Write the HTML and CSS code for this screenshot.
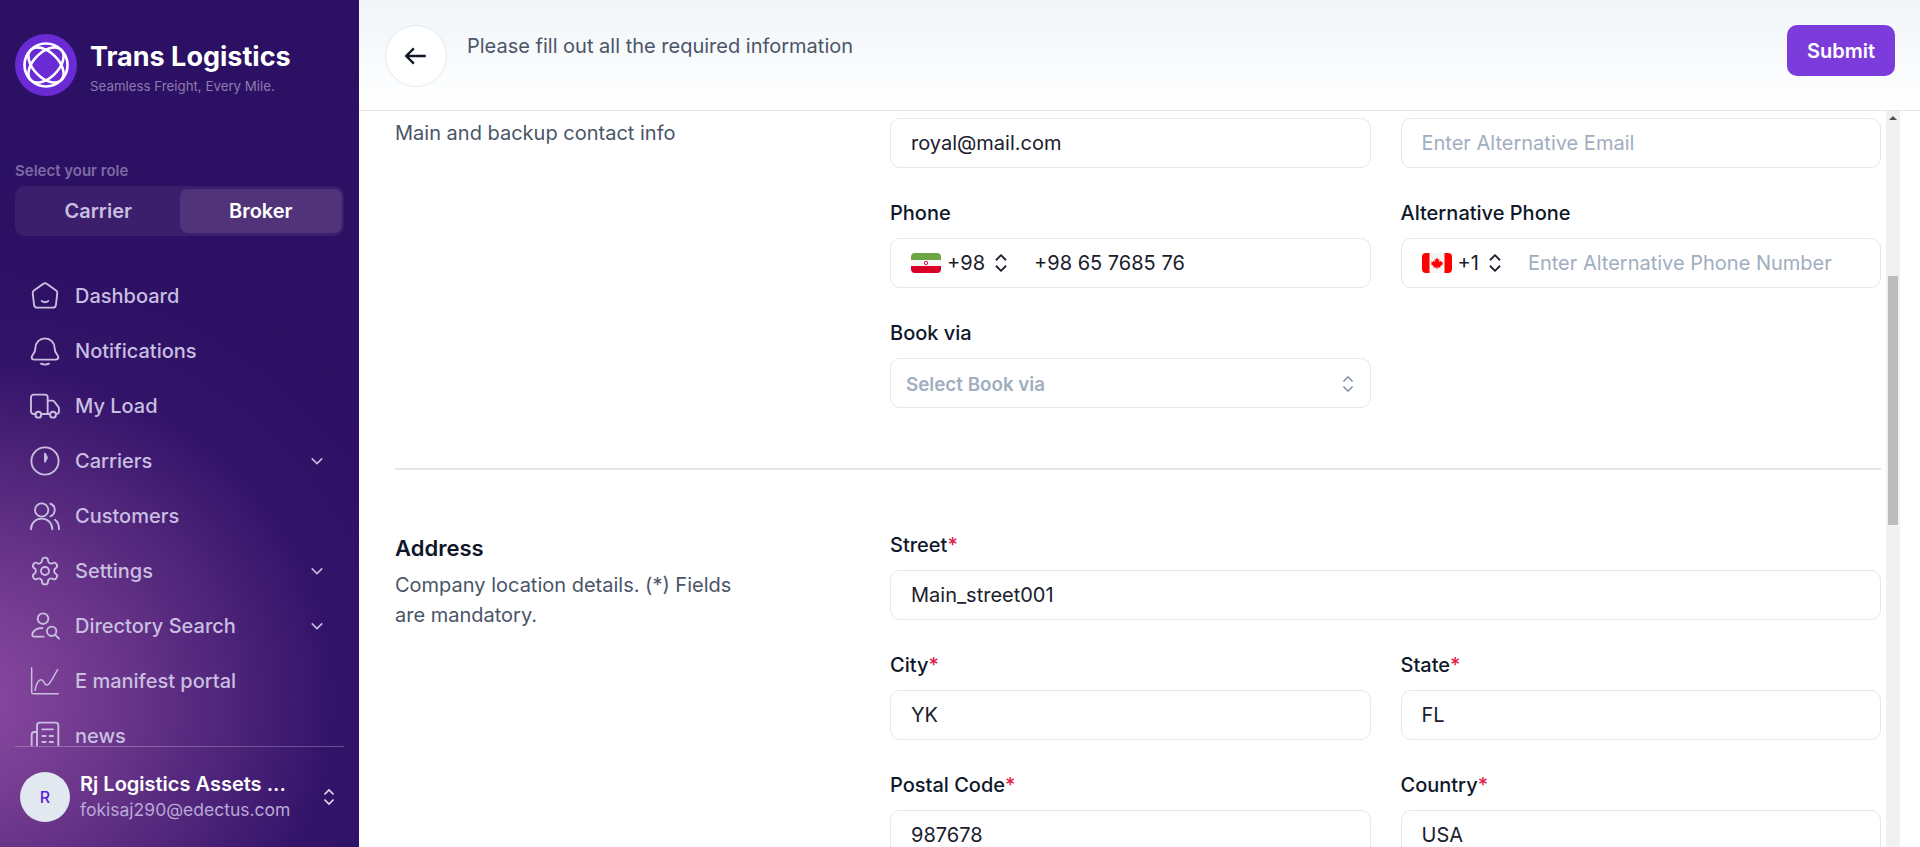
FILE: index.html
```html
<!DOCTYPE html>
<html lang="en">
<head>
    <meta charset="UTF-8">
    <title>Trans Logistics</title>
    <link rel="stylesheet" href="styles.css">
</head>
<body>

<div class="app">
  <aside class="sidebar">
    <div class="brand">
      <svg class="brand-logo" viewBox="0 0 62 62">
        <circle cx="31" cy="31" r="31" fill="#6a2bd4"/>
        <g fill="none" stroke="#fff" stroke-width="2.6">
          <circle cx="31" cy="31" r="21.5"/>
          <ellipse cx="31" cy="31" rx="21.5" ry="12.5" transform="rotate(45 31 31)"/>
          <ellipse cx="31" cy="31" rx="21.5" ry="12.5" transform="rotate(-45 31 31)"/>
        </g>
      </svg>
      <div class="brand-text">
        <div class="brand-name">Trans Logistics</div>
        <div class="brand-tag">Seamless Freight, Every Mile.</div>
      </div>
    </div>

    <div class="role-label">Select your role</div>
    <div class="role-toggle">
      <div class="role-btn">Carrier</div>
      <div class="role-btn active">Broker</div>
    </div>

    <nav class="nav">
      <a class="nav-item">
        <svg class="nav-icon" viewBox="0 0 24 24"><path d="M10.7 2.9a2.2 2.2 0 0 1 2.6 0l7 5a2.2 2.2 0 0 1 .9 2.1l-1 8.6a2.4 2.4 0 0 1-2.4 2.1H6.2a2.4 2.4 0 0 1-2.4-2.1l-1-8.6a2.2 2.2 0 0 1 .9-2.1z"/><path d="M9.5 15.8c1.5 1 3.5 1 5 0"/></svg>
        <span>Dashboard</span>
      </a>
      <a class="nav-item">
        <svg class="nav-icon" viewBox="0 0 24 24"><path d="M12 2.5a7.2 7.2 0 0 0-7.2 7.2c0 4.3-2.8 5.1-2.8 7 0 1 .9 1.8 2 1.8h16c1.1 0 2-.8 2-1.8 0-1.9-2.8-2.7-2.8-7A7.2 7.2 0 0 0 12 2.5z"/><path d="M9 21.5c2 .9 4 .9 6 0"/></svg>
        <span>Notifications</span>
      </a>
      <a class="nav-item">
        <svg class="nav-icon" viewBox="0 0 24 24"><path d="M5 18H3.5a2 2 0 0 1-2-2V5.5a2 2 0 0 1 2-2H12a2 2 0 0 1 2 2V18"/><path d="M14 8h3.500a2 2 0 0 1 1.600.8l3 4a2 2 0 0 1 .4 1.200V16a2 2 0 0 1-2 2"/><path d="M9 18h7"/><circle cx="7" cy="18.500" r="2.200"/><circle cx="18" cy="18.500" r="2.200"/></svg>
        <span>My Load</span>
      </a>
      <a class="nav-item">
        <svg class="nav-icon" viewBox="0 0 24 24"><circle cx="12" cy="12" r="10.200"/><path d="M12 6.500v6l1.500-3z"/></svg>
        <span>Carriers</span>
        <svg class="nav-chevron" viewBox="0 0 24 24"><path d="M5 8.500l7 7 7-7"/></svg>
      </a>
      <a class="nav-item">
        <svg class="nav-icon" viewBox="0 0 24 24"><circle cx="9.500" cy="7.500" r="5"/><path d="M1.500 22c0-4.700 3.500-8 8-8s8 3.300 8 8"/><path d="M16 2.800c2 .6 3.300 2.500 3.300 4.700s-1.300 4-3.300 4.700"/><path d="M19.500 14.800c1.900 1.300 3 3.700 3 7.200"/></svg>
        <span>Customers</span>
      </a>
      <a class="nav-item">
        <svg class="nav-icon" viewBox="0 0 24 24"><path d="M12.22 2h-.44a2 2 0 0 0-2 2v.18a2 2 0 0 1-1 1.73l-.43.25a2 2 0 0 1-2 0l-.15-.08a2 2 0 0 0-2.73.73l-.22.38a2 2 0 0 0 .73 2.73l.15.1a2 2 0 0 1 1 1.72v.51a2 2 0 0 1-1 1.74l-.15.09a2 2 0 0 0-.73 2.73l.22.38a2 2 0 0 0 2.73.73l.15-.08a2 2 0 0 1 2 0l.43.25a2 2 0 0 1 1 1.73V20a2 2 0 0 0 2 2h.44a2 2 0 0 0 2-2v-.18a2 2 0 0 1 1-1.73l.43-.25a2 2 0 0 1 2 0l.15.08a2 2 0 0 0 2.73-.73l.22-.39a2 2 0 0 0-.73-2.73l-.15-.08a2 2 0 0 1-1-1.74v-.5a2 2 0 0 1 1-1.74l.15-.09a2 2 0 0 0 .73-2.73l-.22-.38a2 2 0 0 0-2.73-.73l-.15.08a2 2 0 0 1-2 0l-.43-.25a2 2 0 0 1-1-1.73V4a2 2 0 0 0-2-2z"/><circle cx="12" cy="12" r="3"/></svg>
        <span>Settings</span>
        <svg class="nav-chevron" viewBox="0 0 24 24"><path d="M5 8.500l7 7 7-7"/></svg>
      </a>
      <a class="nav-item">
        <svg class="nav-icon" viewBox="0 0 24 24"><circle cx="10.500" cy="6.500" r="4"/><path d="M10 13.500c-3.500 0-6.500 1.500-7.500 4.500-.3 1 .2 2 1.300 2H11"/><circle cx="17" cy="16" r="3.500"/><path d="M19.500 18.500l3 3"/></svg>
        <span>Directory Search</span>
        <svg class="nav-chevron" viewBox="0 0 24 24"><path d="M5 8.500l7 7 7-7"/></svg>
      </a>
      <a class="nav-item">
        <svg class="nav-icon thin" viewBox="0 0 24 24"><path d="M2 2v18.500a1 1 0 0 0 1 1h19"/><path d="M4.500 19c1-5 2.500-8 4.500-8 2.500 0 2 4 4.500 4 2.500 0 4.500-6 8-11.500"/></svg>
        <span>E manifest portal</span>
      </a>
      <a class="nav-item">
        <svg class="nav-icon" viewBox="0 0 24 24"><path d="M4 22h16a2 2 0 0 0 2-2V4a2 2 0 0 0-2-2H8a2 2 0 0 0-2 2v16a2 2 0 0 1-2 2zm0 0a2 2 0 0 1-2-2v-9c0-1.100.9-2 2-2h2"/><path d="M10 7h8M10 12h2.500M15.500 12H18M10 16.500h2.500M15.500 16.500H18"/></svg>
        <span>news</span>
      </a>
    </nav>

    <div class="account">
      <div class="avatar">R</div>
      <div class="account-info">
        <div class="account-name">Rj Logistics Assets ...</div>
        <div class="account-mail">fokisaj290@edectus.com</div>
      </div>
      <svg class="account-switch" viewBox="0 0 24 24"><path d="M6.500 9l5.500-5.500 5.500 5.500M6.500 15l5.500 5.500 5.500-5.500"/></svg>
    </div>
  </aside>

  <main class="main">
    <header class="topbar">
      <button class="back-btn">
        <svg viewBox="0 0 24 24"><path d="M21 12H3.500M10 5l-7 7 7 7"/></svg>
      </button>
      <p class="topbar-text">Please fill out all the required information</p>
      <button class="submit-btn">Submit</button>
    </header>

    <div class="content">
      <div class="form-scroll">
        <section class="form-section">
          <div class="section-info">
            <p>Main and backup contact info</p>
          </div>
          <div class="fields">
            <div class="field"><input class="text-input" type="text" value="royal@mail.com"></div>
            <div class="field"><input class="text-input" type="text" placeholder="Enter Alternative Email"></div>

            <div class="field">
              <label>Phone</label>
              <div class="phone-input">
                <svg class="flag" viewBox="0 0 30 20">
                  <clipPath id="flagIr"><rect width="30" height="20" rx="4"/></clipPath>
                  <g clip-path="url(#flagIr)">
                    <rect width="30" height="7" fill="#6da544"/>
                    <rect y="7" width="30" height="6" fill="#f6f6f6"/>
                    <rect y="13" width="30" height="7" fill="#d80027"/>
                    <circle cx="15" cy="10" r="1.700" fill="none" stroke="#d80027" stroke-width=".9"/>
                  </g>
                </svg>
                <span class="dial">+98</span>
                <svg class="dial-sort" viewBox="0 0 24 24"><path d="M6.500 9l5.500-5.500 5.500 5.500M6.500 15l5.500 5.500 5.500-5.500"/></svg>
                <input class="phone-number" type="text" value="+98 65 7685 76">
              </div>
            </div>
            <div class="field">
              <label>Alternative Phone</label>
              <div class="phone-input">
                <svg class="flag" viewBox="0 0 30 20">
                  <clipPath id="flagCa"><rect width="30" height="20" rx="4"/></clipPath>
                  <g clip-path="url(#flagCa)">
                    <rect width="30" height="20" fill="#f6f6f6"/>
                    <rect width="7.500" height="20" fill="#ff0000"/>
                    <rect x="22.500" width="7.500" height="20" fill="#ff0000"/>
                    <path d="M15 4.500l1.200 2.200 1.300-.7-.5 3 1.700-1.200.4 1.200 1.800-.3-.6 1.900.8.500-3 2.400.3 1.200-2.900-.4V16h-1v-1.700l-2.900.4.300-1.200-3-2.400.8-.5-.6-1.900 1.800.3.4-1.200L13 9l-.5-3 1.300.7z" fill="#ff0000"/>
                  </g>
                </svg>
                <span class="dial">+1</span>
                <svg class="dial-sort" viewBox="0 0 24 24"><path d="M6.500 9l5.500-5.500 5.500 5.500M6.500 15l5.500 5.500 5.500-5.500"/></svg>
                <input class="phone-number" type="text" placeholder="Enter Alternative Phone Number">
              </div>
            </div>

            <div class="field">
              <label>Book via</label>
              <div class="select-input">
                <span>Select Book via</span>
                <svg viewBox="0 0 24 24"><path d="M6.500 9l5.500-5.500 5.500 5.500M6.500 15l5.500 5.500 5.500-5.500"/></svg>
              </div>
            </div>
          </div>
        </section>

        <section class="form-section last">
          <div class="section-info">
            <h3>Address</h3>
            <p>Company location details. (*) Fields are mandatory.</p>
          </div>
          <div class="fields">
            <div class="field wide">
              <label>Street<em>*</em></label>
              <input class="text-input" type="text" value="Main_street001">
            </div>
            <div class="field">
              <label>City<em>*</em></label>
              <input class="text-input" type="text" value="YK">
            </div>
            <div class="field">
              <label>State<em>*</em></label>
              <input class="text-input" type="text" value="FL">
            </div>
            <div class="field">
              <label>Postal Code<em>*</em></label>
              <input class="text-input" type="text" value="987678">
            </div>
            <div class="field">
              <label>Country<em>*</em></label>
              <input class="text-input" type="text" value="USA">
            </div>
          </div>
        </section>
      </div>

      <div class="scrollbar">
        <div class="scroll-arrow"></div>
        <div class="scroll-thumb"></div>
      </div>
    </div>
  </main>
</div>

</body>
</html>
```
FILE: styles.css
```css
* {
	box-sizing: border-box;
}
html, body {
	height: 100%;
}
body {
	margin: 0;
	font-family: Inter, "Liberation Sans", sans-serif;
	color: #0f172a;
	overflow: hidden;
}
.app {
	display: flex;
	height: 100vh;
}

/* Sidebar */
.sidebar {
	width: 359px;
	flex-shrink: 0;
	display: flex;
	flex-direction: column;
	color: #c9bfe0;
	background-color: #2c1063;
	background-image:
		radial-gradient(ellipse 520px 470px at -40px 700px, #8d4ba3 0%, rgba(125, 65, 150, 0.78) 30%, rgba(60, 25, 115, 0.4) 72%, rgba(44, 16, 99, 0) 100%);
}
.brand {
	display: flex;
	align-items: center;
	gap: 13px;
	padding: 34px 0 0 15px;
}
.brand-logo {
	width: 62px;
	height: 62px;
}
.brand-text {
	margin-top: 4px;
}
.brand-name {
	font-size: 27px;
	font-weight: 700;
	line-height: 36px;
	color: #fff;
}
.brand-tag {
	margin-top: 1px;
	font-size: 13.3px;
	line-height: 20px;
	color: #8f7bb0;
}
.role-label {
	margin: 65px 0 0 15px;
	font-size: 15px;
	font-weight: 600;
	line-height: 20px;
	color: #7f6aa3;
}
.role-toggle {
	display: flex;
	margin: 5px 15px 0 15px;
	height: 50px;
	padding: 3px 2px;
	border-radius: 10px;
	background: #3b1f6d;
}
.role-btn {
	flex: 1;
	display: flex;
	align-items: center;
	justify-content: center;
	border-radius: 8px;
	font-size: 20px;
	font-weight: 600;
}
.role-btn.active {
	background: #503378;
	color: #fff;
}
.nav {
	flex: 1;
	min-height: 0;
	overflow: hidden;
	margin-top: 32px;
}
.nav-item {
	display: flex;
	align-items: center;
	height: 55px;
	padding: 0 33px 0 29px;
	font-size: 20px;
	font-weight: 500;
	line-height: 20px;
}
.nav-item span {
	flex: 1;
	margin-left: 14px;
}
.nav-icon {
	width: 32px;
	height: 32px;
	fill: none;
	stroke: #c9bfe0;
	stroke-width: 1.400;
	stroke-linecap: round;
	stroke-linejoin: round;
}
.nav-icon.thin {
	stroke-width: 1.100;
}
.nav-chevron {
	width: 18px;
	height: 18px;
	fill: none;
	stroke: #c9bfe0;
	stroke-width: 2;
}
.account {
	display: flex;
	align-items: center;
	height: 101px;
	margin: 0 15px;
	padding: 0 0 0 5px;
	border-top: 1px solid rgba(255, 255, 255, 0.25);
}
.avatar {
	width: 50px;
	height: 50px;
	flex-shrink: 0;
	display: flex;
	align-items: center;
	justify-content: center;
	border-radius: 50%;
	background: #e2e8f0;
	color: #5b21d6;
	font-size: 16px;
	font-weight: 500;
}
.account-info {
	flex: 1;
	margin-left: 10px;
	white-space: nowrap;
}
.account-name {
	font-size: 20px;
	font-weight: 600;
	line-height: 26px;
	color: #fff;
}
.account-mail {
	font-size: 17.5px;
	line-height: 26px;
	color: #b9a8d6;
}
.account-switch {
	width: 20px;
	height: 20px;
	margin-right: 5px;
	fill: none;
	stroke: #e0d8ee;
	stroke-width: 2;
}

/* Top bar */
.main {
	flex: 1;
	min-width: 0;
	display: flex;
	flex-direction: column;
}
.topbar {
	display: flex;
	height: 111px;
	flex-shrink: 0;
	padding: 25px 25px 0 26px;
	border-bottom: 1px solid #e3e5ea;
	background: linear-gradient(180deg, #f1f5f9 0%, #ffffff 100%);
}
.back-btn {
	width: 62px;
	height: 62px;
	display: flex;
	align-items: center;
	justify-content: center;
	padding: 0;
	border: 1px solid #e2e8f0;
	border-radius: 50%;
	background: #fff;
}
.back-btn svg {
	width: 26px;
	height: 26px;
	fill: none;
	stroke: #0f172a;
	stroke-width: 2.200;
}
.topbar-text {
	flex: 1;
	margin: 9px 0 0 20px;
	font-size: 20px;
	line-height: 24px;
	color: #4a5568;
}
.submit-btn {
	width: 108px;
	height: 51px;
	border: 0;
	border-radius: 10px;
	background: #7c3cdb;
	color: #fff;
	font-family: inherit;
	font-size: 20px;
	font-weight: 600;
}

/* Form */
.content {
	flex: 1;
	min-height: 0;
	display: flex;
	padding-right: 20px;
}
.form-scroll {
	flex: 1;
	min-width: 0;
	overflow: hidden;
	padding: 7px 5px 0 36px;
}
.form-section {
	display: grid;
	grid-template-columns: 495px 1fr;
	padding-bottom: 60px;
	border-bottom: 2px solid #e3e5ea;
}
.form-section.last {
	padding-top: 63px;
	border-bottom: 0;
}
.section-info h3 {
	margin: 0 0 7px;
	font-size: 22px;
	font-weight: 600;
	line-height: 30px;
}
.section-info p {
	max-width: 370px;
	margin: 0;
	font-size: 20px;
	line-height: 30px;
	color: #4a5568;
}
.fields {
	display: grid;
	grid-template-columns: 1fr 1fr;
	gap: 33px 30px;
}
.field.wide {
	grid-column: span 2;
}
.field label {
	display: block;
	margin-bottom: 13px;
	font-size: 20px;
	font-weight: 500;
	line-height: 24px;
}
.field em {
	font-style: normal;
	color: #e11d48;
}
.text-input, .phone-input, .select-input {
	width: 100%;
	height: 50px;
	border: 1px solid #e2e8f0;
	border-radius: 10px;
	background: #fff;
}
.text-input {
	display: block;
	padding: 0 20px;
	font-family: inherit;
	font-size: 20px;
	color: #1a202c;
}
.text-input::placeholder, .phone-number::placeholder {
	color: #a0aec0;
}
.phone-input {
	display: flex;
	align-items: center;
	padding-left: 20px;
}
.flag {
	width: 30px;
	height: 20px;
	flex-shrink: 0;
}
.dial {
	margin-left: 6px;
	font-size: 20px;
	color: #1a202c;
}
.dial-sort {
	width: 22px;
	height: 22px;
	flex-shrink: 0;
	margin: 0 22px 0 5px;
	fill: none;
	stroke: #1a202c;
	stroke-width: 2;
}
.phone-number {
	flex: 1;
	min-width: 0;
	border: 0;
	padding: 0;
	background: transparent;
	font-family: inherit;
	font-size: 20px;
	color: #1a202c;
}
.select-input {
	display: flex;
	align-items: center;
	justify-content: space-between;
	padding: 2px 12px 0 15px;
	font-size: 18.8px;
	font-weight: 600;
	color: #a0aec0;
}
.select-input svg {
	width: 20px;
	height: 20px;
	fill: none;
	stroke: #718096;
	stroke-width: 1.500;
}

/* Scrollbar */
.scrollbar {
	position: relative;
	width: 14px;
	flex-shrink: 0;
	background: #f1f1f1;
}
.scroll-arrow {
	width: 0;
	margin: 5px auto 0;
	border: 4px solid transparent;
	border-top: 0;
	border-bottom: 4px solid #505050;
}
.scroll-thumb {
	position: absolute;
	top: 165px;
	left: 2px;
	width: 10px;
	height: 249px;
	background: #bcbcbc;
}
```
